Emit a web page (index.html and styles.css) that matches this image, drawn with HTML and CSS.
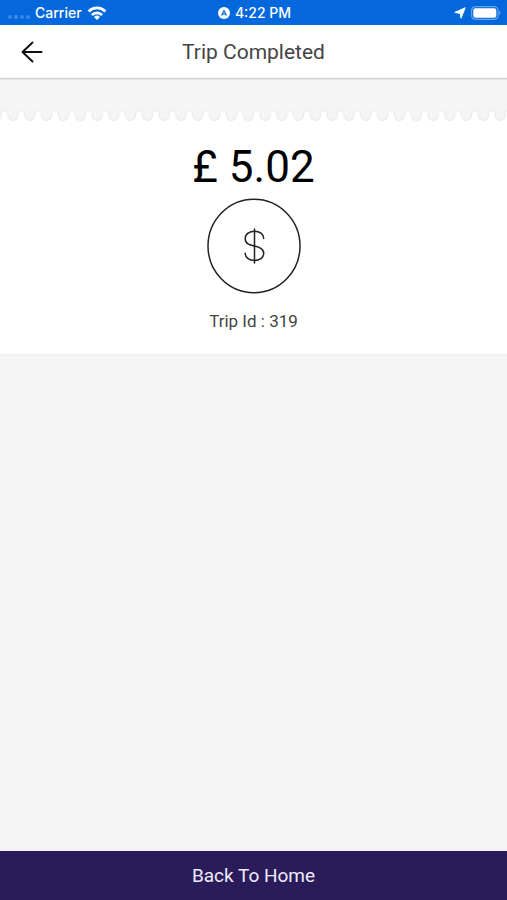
FILE: index.html
```html
<!DOCTYPE html>
<html lang="en">
<head>
  <meta charset="UTF-8" />
  <meta name="viewport" content="width=device-width, initial-scale=1.0" />
  <title>Trip Completed</title>
  <link rel="stylesheet" href="styles.css">
</head>
<body>
  <div class="status-bar">
    <div class="status-left">
      <span class="signal"><i></i><i></i><i></i><i></i></span>
      <span>Carrier</span>
      <svg class="wifi" width="20" height="14" viewBox="0 0 20 14" fill="none" stroke="#fff" stroke-width="2.8">
        <path d="M1.6 5.4a12 12 0 0 1 16.8 0" />
        <path d="M4.9 8.9a7.2 7.2 0 0 1 10.2 0" />
        <path d="M10 14l-3-3a4.3 4.3 0 0 1 6 0z" fill="#fff" stroke="none" />
      </svg>
    </div>
    <div class="status-center">
      <svg width="12" height="12" viewBox="0 0 12 12">
        <circle cx="6" cy="6" r="6" fill="#fff" />
        <path d="M6 2.2l3.1 6.7L6 7.4 2.9 8.9z" fill="#0468dc" />
        <path d="M6 5l.9 1.9L6 6.5l-.9.4z" fill="#fff" />
      </svg>
      <span>4:22 PM</span>
    </div>
    <div class="status-right">
      <svg width="12" height="12" viewBox="0 0 12 12">
        <path d="M11.2.8L7 11.2 6.2 6.4.8 5.4z" fill="#fff" stroke="#fff" stroke-width="1" stroke-linejoin="round" />
      </svg>
      <svg width="30" height="14" viewBox="0 0 30 14">
        <rect x=".6" y=".6" width="26.4" height="12.8" rx="4" fill="none" stroke="#68a4ea" stroke-width="1.2" />
        <rect x="2.3" y="2.3" width="23" height="9.4" rx="2.2" fill="#fff" />
        <path d="M28.2 4.8a2.5 2.5 0 0 1 0 4.4z" fill="#68a4ea" />
      </svg>
    </div>
  </div>

  <header class="header">
    <button class="back-btn" aria-label="Back" onclick="history.back()">
      <svg width="22" height="22" viewBox="0 0 22 22" fill="none" stroke="#111" stroke-width="2" stroke-linecap="round" stroke-linejoin="round">
        <path d="M20.5 11H1.5M11.5 1.5L1.5 11l10 9.5" />
      </svg>
    </button>
    <h1>Trip Completed</h1>
  </header>

  <main class="content">
    <section class="receipt">
      <!-- torn paper edge -->
      <svg class="edge" width="100%" height="12">
        <defs>
          <pattern id="scallop" x="4.6" y="0" width="16.8" height="12" patternUnits="userSpaceOnUse">
            <path d="M0 0H16.8V.8H15.6Q13.6 .8 13.6 3V5A5.2 5.4 0 0 1 3.2 5V3Q3.2 .8 1.2 .8H0z" fill="#f5f5f5" />
            <path d="M0 .8H1.2Q3.2 .8 3.2 3V5A5.2 5.4 0 0 0 13.6 5V3Q13.6 .8 15.6 .8H16.8" fill="none" stroke="#e9e9e9" />
          </pattern>
        </defs>
        <rect width="100%" height="12" fill="url(#scallop)" />
      </svg>
      <p class="amount">£ 5.02</p>
      <svg class="coin" width="94" height="96" viewBox="0 0 94 96" fill="none" stroke="#222" stroke-width="1.5" stroke-linecap="round">
        <ellipse cx="47" cy="48" rx="46" ry="46.7" />
        <path d="M47.5 31V65" />
        <path d="M56.7 40.5C56.7 36 52.5 33.2 47.5 33.2S38.2 36 38.2 40.7C38.2 45.7 42.5 47 47.5 48.1S56.7 51 56.7 55.4C56.7 59.8 52.5 62.6 47.5 62.6S38.2 59.8 38.2 55.2" />
      </svg>
      <p class="trip-id">Trip Id : 319</p>
    </section>
  </main>

  <button class="home-btn">Back To Home</button>
</body>
</html>
```
FILE: styles.css
```css
* {
  box-sizing: border-box;
}

body {
  margin: 0;
  min-height: 100vh;
  display: flex;
  flex-direction: column;
  background: #f5f5f5;
  color: #000;
  font-family: Roboto, sans-serif;
}

svg {
  display: block;
}

.status-bar {
  display: grid;
  grid-template-columns: 1fr auto 1fr;
  align-items: center;
  height: 25px;
  padding: 0 6px 0 8px;
  background: #0468dc;
  color: #fff;
  font-family: Inter, sans-serif;
  font-size: 14px;
  font-weight: 500;
}

.status-left,
.status-center,
.status-right {
  display: flex;
  align-items: center;
  gap: 5px;
}

.status-right {
  justify-content: flex-end;
}

.signal {
  display: flex;
  gap: 2px;
  padding-top: 8px;
}

.signal i {
  width: 4px;
  height: 4px;
  border-radius: 50%;
  background: #3b8ae5;
}

.header {
  display: grid;
  grid-template-columns: 44px 1fr 44px;
  align-items: center;
  height: 54px;
  padding: 0 10px;
  background: #fff;
  border-bottom: 1px solid #cfcfcf;
  box-shadow: 0 1px 1px #e6e6e6;
}

.header h1 {
  margin: 0;
  text-align: center;
  color: #444;
  font-size: 21px;
  font-weight: 400;
}

.back-btn {
  display: flex;
  align-items: center;
  justify-content: center;
  height: 44px;
  padding: 0;
  border: none;
  background: none;
  cursor: pointer;
}

.content {
  flex: 1;
  padding-top: 31px;
}

.receipt {
  display: flex;
  flex-direction: column;
  align-items: center;
  padding-bottom: 21px;
  background: #fff;
  border-bottom: 1px solid #eee;
}

.amount {
  margin: 18px 0 4px;
  font-size: 44px;
  line-height: 54px;
}

.trip-id {
  margin: 15px 0 0;
  color: #444;
  font-size: 17px;
  line-height: 24px;
}

.edge {
  align-self: stretch;
}

.home-btn {
  height: 49px;
  border: none;
  background: #2a1c5a;
  color: #eeebf6;
  font-family: inherit;
  font-size: 19px;
  cursor: pointer;
}
```
